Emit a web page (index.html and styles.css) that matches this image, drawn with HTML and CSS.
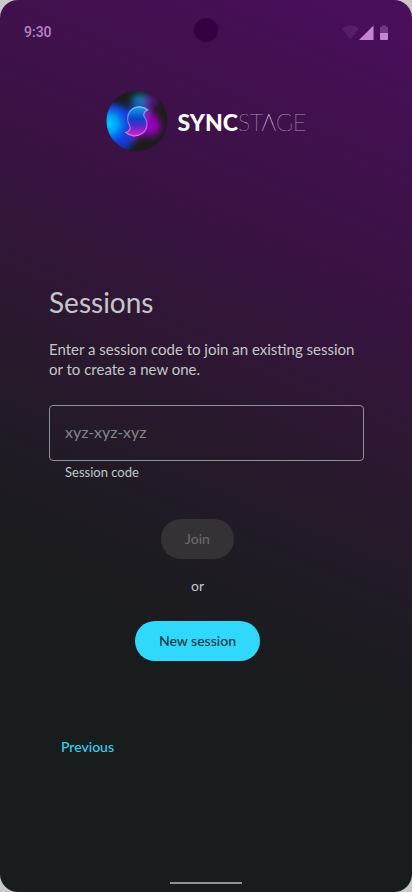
FILE: index.html
```html
<!DOCTYPE html>
<html lang="en">
<head>
<meta charset="utf-8">
<meta name="viewport" content="width=device-width, initial-scale=1">
<title>SyncStage – Sessions</title>
<link rel="stylesheet" href="styles.css">
</head>
<body>
<div class="screen">
  <header class="status">
    <span class="time">9:30</span>
    <span class="camera"></span>
    <svg class="indicators" width="48" height="18" viewBox="0 0 48 18" aria-hidden="true">
      <path d="M0 4.500C5 .5 12 .5 17 4.500L8.500 15.500z" fill="#c284d2" opacity=".13"/>
      <path d="M31.500 1.500V16H17z" fill="#c284d2"/>
      <path d="M38 3h2V1.500h4V3h2v6h-8z" fill="#c284d2" opacity=".35"/>
      <path d="M38 9h8v6.200q0 .8-.8.8h-6.400q-.8 0-.8-.8z" fill="#c284d2"/>
    </svg>
  </header>

  <div class="brand">
    <svg class="mark" width="62" height="62" viewBox="0 0 62 62" aria-hidden="true">
      <defs>
        <clipPath id="disc"><circle cx="31" cy="31" r="30.500"/></clipPath>
        <filter id="soft" x="-50%" y="-50%" width="200%" height="200%"><feGaussianBlur stdDeviation="3.500"/></filter>
        <radialGradient id="cyan"><stop offset="0" stop-color="#00ccff"/><stop offset=".4" stop-color="#009df5"/><stop offset="1" stop-color="#0a50e0" stop-opacity="0"/></radialGradient>
        <linearGradient id="swirl" x1="0" y1="0" x2="0" y2="1"><stop offset="0" stop-color="#16a2e8"/><stop offset=".42" stop-color="#0b43cb"/><stop offset=".66" stop-color="#5629c8"/><stop offset="1" stop-color="#e01ad0"/></linearGradient>
        <linearGradient id="rim" x1="0" y1="0" x2="0" y2="1"><stop offset="0" stop-color="#75caf5"/><stop offset=".5" stop-color="#8d69dc"/><stop offset="1" stop-color="#dd76e7"/></linearGradient>
      </defs>
      <g clip-path="url(#disc)">
        <rect width="62" height="62" fill="#1d1b1b"/>
        <g filter="url(#soft)">
          <path d="M-6 15Q12 14 24 19L32 39Q28 58 16 61L-6 50z" fill="#1737d8"/>
          <ellipse cx="43" cy="11" rx="10" ry="6" fill="#58108d"/>
          <ellipse cx="33" cy="10" rx="7" ry="6" fill="#087cb8"/>
          <path d="M32 17L44 20Q53 27 55 38Q50 49 38 45L27 48z" fill="#9800bb"/>
          <path d="M27 13L42 16L37 30L23 29z" fill="#1749c8"/>
        </g>
        <circle cx="3" cy="34" r="23" fill="url(#cyan)"/>
      </g>
      <path d="M42 20C37 16 31 16 27 18.500C22 21.500 20.500 28 22.500 33C23.300 35.500 24.800 37 24.200 38.800C23.500 41 22 42 19.500 42.300C24 46.500 31 47 36 43.500C41 40.500 42 34 40 29.500C39 27.500 37.300 26.500 37.800 24.300C38.300 22 39.500 20.500 42 20z" fill="url(#swirl)" stroke="url(#rim)" stroke-width="1.200" stroke-linejoin="round"/>
    </svg>
    <span class="wordmark"><b>SYNC</b><span class="thin">STAGE</span></span>
  </div>

  <main class="content">
    <h1>Sessions</h1>
    <p class="intro">Enter a session code to join an existing session or to create a new one.</p>
    <form class="form">
      <input id="code" type="text" placeholder="xyz-xyz-xyz">
      <label for="code">Session code</label>
      <div class="actions">
        <button class="button" type="submit" disabled>Join</button>
        <span class="or">or</span>
        <button class="button primary" type="button">New session</button>
      </div>
    </form>
    <a class="previous" href="#">Previous</a>
  </main>
  <div class="home"></div>
</div>
</body>
</html>
```

FILE: styles.css
```css
* {
  box-sizing: border-box;
}

body {
  margin: 0;
  background: #c8c8c8;
  font-family: Lato, "Liberation Sans", sans-serif;
  font-size: 14px;
  line-height: 20px;
  color: #c4c7c7;
}

.screen {
  display: flex;
  flex-direction: column;
  min-height: 100vh;
  padding-bottom: 8px;
  border-radius: 18px;
  background: linear-gradient(203deg, #4b0e5d 0%, #41104e 15%, #381341 30%, #2a182e 46%, #1f1b24 59%, #191c1d 73%);
}

.status {
  display: grid;
  grid-template-columns: 1fr 24px 1fr;
  align-items: center;
  height: 60px;
  padding: 4px 24px 0;
}

.time {
  font: 500 14px/20px Roboto, sans-serif;
  color: #b983c6;
}

.camera {
  width: 24px;
  height: 24px;
  margin-top: -4px;
  border-radius: 50%;
  background: #340042;
}

.indicators {
  justify-self: end;
  margin: 2px -2px 0 0;
}

.brand {
  display: flex;
  align-items: center;
  justify-content: center;
  gap: 10px;
  margin-top: 30px;
}

.wordmark {
  padding-top: 2px;
  font-size: 23px;
  line-height: 28px;
  color: #fff;
}

.wordmark b {
  font-weight: 900;
}

.thin {
  font-weight: 100;
}

.content {
  display: flex;
  flex-direction: column;
  flex: 1;
  padding: 0 48px 0 49px;
}

h1 {
  margin: 132px 0 0;
  font-size: 28px;
  font-weight: 400;
  line-height: 36px;
}

.intro {
  margin: 19px 0 0;
  font-size: 15px;
}

.form {
  display: flex;
  flex-direction: column;
  margin-top: 26px;
}

input {
  width: 100%;
  height: 56px;
  padding: 0 15px 4px;
  border: 1px solid #899294;
  border-radius: 4px;
  background: transparent;
  font: inherit;
  font-size: 16px;
  color: #c4c7c7;
}

input::placeholder {
  color: #7f8589;
  opacity: 1;
}

label {
  padding: 3px 16px 0;
  font-size: 13px;
  line-height: 16px;
  color: #bfc8ca;
}

.actions {
  display: flex;
  flex-direction: column;
  align-items: center;
  margin: 39px 18px 0 0;
}

.button {
  height: 40px;
  padding: 0 24px;
  border: 0;
  border-radius: 20px;
  background: #343137;
  font: inherit;
  font-weight: 500;
  color: #6b686e;
}

.or {
  margin: 17px 0 25px;
}

.primary {
  background: #30d9fc;
  color: #00363f;
}

.previous {
  align-self: flex-start;
  margin: 76px 0 0 12px;
  font-weight: 500;
  color: #30d1f0;
  text-decoration: none;
}

.home {
  align-self: center;
  width: 72px;
  height: 2px;
  background: #909191;
}
```
